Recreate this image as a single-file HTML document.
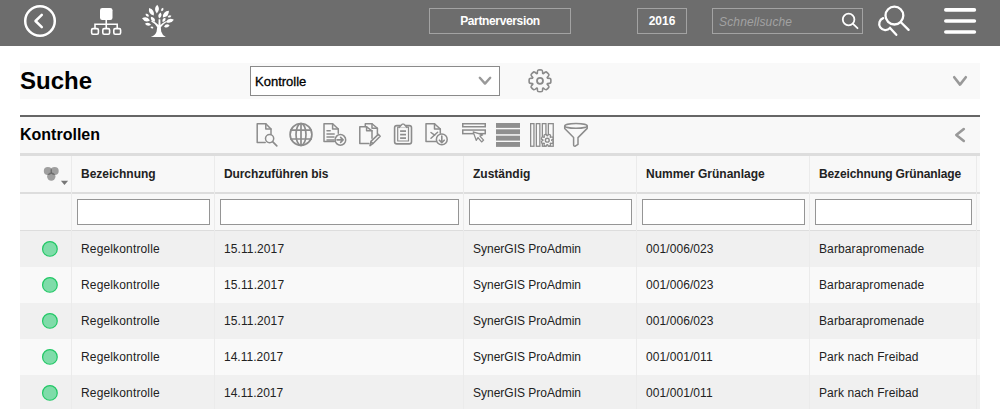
<!DOCTYPE html>
<html><head><meta charset="utf-8">
<style>
*{box-sizing:border-box;margin:0;padding:0}
html,body{width:1000px;height:409px;overflow:hidden;background:#fff;font-family:"Liberation Sans",sans-serif;color:#222}
.abs{position:absolute}
#hdr{position:absolute;left:0;top:0;width:1000px;height:46px;background:#6d6d6d}
.hbox{position:absolute;top:8px;height:26px;border:1px solid #a3a3a3;color:#fff;font-weight:bold;font-size:12px;line-height:24px;text-align:center}
#panel{position:absolute;left:20px;top:63px;width:960px;height:36px;background:#f9f9f9}
#sec{position:absolute;left:20px;top:115px;width:960px;height:38px;background:#f8f8f8;border-top:2px solid #666}
#tbl{position:absolute;left:20px;top:153px;width:960px;height:256px;overflow:hidden;background:#f8f8f8}
.hline{position:absolute;left:0;width:960px;background:#dddddd}
.vsep{position:absolute;width:1px;background:#ebebeb}
.row{position:absolute;left:0;width:960px;height:36px}
.odd{background:#f0f0f0}.even{background:#f9f9f9}
.txt{position:absolute;font-size:12px;white-space:nowrap}
.hd{font-weight:bold;color:#222}
.inp{position:absolute;top:46px;height:26px;border:1px solid #959595;background:#fff}
.dot{position:absolute;left:22px;width:16px;height:16px;border-radius:50%;background:#7ddaa6;border:1.5px solid #2ecc71}
</style></head><body>
<div id="hdr">
  <svg class="abs" style="left:0;top:0" width="1000" height="46" viewBox="0 0 1000 46">
    <g fill="none" stroke="#fff" stroke-width="2.5">
      <circle cx="40" cy="21" r="14.8"/>
      <polyline points="41.8,14.8 35.5,21 41.8,27.2" stroke-linecap="round" stroke-linejoin="round"/>
    </g>
    <!-- org chart -->
    <g fill="#fff">
      <rect x="100" y="8" width="12.5" height="12" rx="2.2"/>
    </g>
    <g fill="none" stroke="#fff" stroke-width="1.6">
      <line x1="106.25" y1="20" x2="106.25" y2="28.5"/>
      <polyline points="95,28.5 95,24.2 117.2,24.2 117.2,28.5"/>
      <rect x="91.6" y="28.6" width="6.8" height="5.6" rx="1.4"/>
      <rect x="102.8" y="28.6" width="6.8" height="5.6" rx="1.4"/>
      <rect x="113.8" y="28.6" width="6.8" height="5.6" rx="1.4"/>
    </g>
    <!-- tree -->
    <g fill="#fff"><path d="M150.8,37 L165.8,37 Q162.2,35.2 161.2,31.5 L160.8,27.2 Q163.2,24 166.5,22 L165.9,21.2 Q162.5,23 160.5,25 L160.3,19.2 L158.6,19.2 L158.5,25 Q156,22.2 151.8,20.6 L151.2,21.5 Q155,23.4 157.2,27.2 L156.6,31.5 Q155.6,35.2 150.8,37 Z"/><path d="M157.23,4.81 Q160.89,9.30 156.77,13.39 Q153.11,8.90 157.23,4.81Z"/><path d="M149.07,8.07 Q154.87,9.63 153.73,15.53 Q147.93,13.97 149.07,8.07Z"/><path d="M163.15,7.69 Q164.24,10.41 161.45,11.31 Q160.36,8.59 163.15,7.69Z"/><path d="M168.91,10.76 Q169.09,16.97 162.89,17.44 Q162.71,11.23 168.91,10.76Z"/><path d="M145.59,13.85 Q148.83,13.26 148.81,16.55 Q145.57,17.14 145.59,13.85Z"/><path d="M160.68,12.60 Q162.91,16.31 159.12,18.40 Q156.89,14.69 160.68,12.60Z"/><path d="M142.04,18.34 Q147.01,15.63 149.96,20.46 Q144.99,23.17 142.04,18.34Z"/><path d="M150.84,16.75 Q155.44,17.07 154.96,21.65 Q150.36,21.33 150.84,16.75Z"/><path d="M171.38,15.72 Q170.30,18.60 167.62,17.08 Q168.70,14.20 171.38,15.72Z"/><path d="M173.86,19.71 Q170.81,24.57 165.74,21.89 Q168.79,17.03 173.86,19.71Z"/><path d="M165.43,17.85 Q166.24,21.47 162.57,21.95 Q161.76,18.33 165.43,17.85Z"/><path d="M144.95,23.76 Q148.51,21.42 151.05,24.84 Q147.49,27.18 144.95,23.76Z"/><path d="M169.60,25.15 Q167.61,28.91 164.00,26.65 Q165.99,22.89 169.60,25.15Z"/><path d="M150.35,27.09 Q152.40,25.62 153.45,27.91 Q151.40,29.38 150.35,27.09Z"/></g>
    <!-- small search -->
    <g fill="none" stroke="#fff" stroke-width="1.8" stroke-linecap="round">
      <circle cx="848.6" cy="19.5" r="5.8"/>
      <line x1="852.8" y1="23.7" x2="857.5" y2="28.2"/>
    </g>
    <!-- double magnifier -->
    <g fill="none" stroke="#fff" stroke-width="2.3" stroke-linecap="round">
      <circle cx="894.4" cy="15.6" r="8.9"/>
      <line x1="900.9" y1="22.2" x2="908.6" y2="29.9"/>
      <path d="M883.18,18.11 A6.2,6.2 0 1 0 890.01,28.05 L896.3,34.8"/>
    </g>
    <!-- hamburger -->
    <g stroke="#fff" stroke-width="3.6" stroke-linecap="round">
      <line x1="945.8" y1="9.9" x2="974.4" y2="9.9"/>
      <line x1="945.8" y1="21" x2="974.4" y2="21"/>
      <line x1="945.8" y1="32" x2="974.4" y2="32"/>
    </g>
  </svg>
  <div class="hbox" style="left:429px;width:142px;letter-spacing:-0.36px">Partnerversion</div>
  <div class="hbox" style="left:637px;width:50px">2016</div>
  <div class="hbox" style="left:712px;width:151px;text-align:left"><span style="position:absolute;left:6px;top:1px;font-weight:normal;font-style:italic;color:#a2a2a2;letter-spacing:0.15px">Schnellsuche</span></div>
</div>

<div id="panel">
  <div class="txt" style="left:0;top:3px;font-size:24px;font-weight:bold;color:#000;line-height:30px">Suche</div>
  <div class="abs" style="left:230px;top:3px;width:250px;height:30px;border:1px solid #8a8a8a;background:#fff">
    <span class="txt" style="left:4px;top:7px;color:#000;line-height:16px;font-size:13px;-webkit-text-stroke:0.3px #000">Kontrolle</span>
  </div>
  <svg class="abs" style="left:0;top:0" width="960" height="36" viewBox="20 63 960 36">
    <polyline points="479.8,77.8 485,83.6 490.2,77.8" fill="none" stroke="#999" stroke-width="2.4" stroke-linecap="round" stroke-linejoin="round"/>
    <polyline points="954.2,77.2 960,84.6 965.8,77.2" fill="none" stroke="#999" stroke-width="2.6" stroke-linecap="round" stroke-linejoin="round"/>
    <g transform="translate(540 80.8)" fill="none" stroke="#8a8a8a" stroke-width="1.6">
      <path d="M-2.70,-7.42 Q-2.64,-10.58 -1.71,-10.77 A10.9,10.9 0 0 1 1.71,-10.77 Q2.64,-10.58 2.70,-7.42 A7.9,7.9 0 0 1 3.34,-7.16 Q5.61,-9.34 6.41,-8.82 A10.9,10.9 0 0 1 8.82,-6.41 Q9.34,-5.61 7.16,-3.34 A7.9,7.9 0 0 1 7.42,-2.70 Q10.58,-2.64 10.77,-1.71 A10.9,10.9 0 0 1 10.77,1.71 Q10.58,2.64 7.42,2.70 A7.9,7.9 0 0 1 7.16,3.34 Q9.34,5.61 8.82,6.41 A10.9,10.9 0 0 1 6.41,8.82 Q5.61,9.34 3.34,7.16 A7.9,7.9 0 0 1 2.70,7.42 Q2.64,10.58 1.71,10.77 A10.9,10.9 0 0 1 -1.71,10.77 Q-2.64,10.58 -2.70,7.42 A7.9,7.9 0 0 1 -3.34,7.16 Q-5.61,9.34 -6.41,8.82 A10.9,10.9 0 0 1 -8.82,6.41 Q-9.34,5.61 -7.16,3.34 A7.9,7.9 0 0 1 -7.42,2.70 Q-10.58,2.64 -10.77,1.71 A10.9,10.9 0 0 1 -10.77,-1.71 Q-10.58,-2.64 -7.42,-2.70 A7.9,7.9 0 0 1 -7.16,-3.34 Q-9.34,-5.61 -8.82,-6.41 A10.9,10.9 0 0 1 -6.41,-8.82 Q-5.61,-9.34 -3.34,-7.16 A7.9,7.9 0 0 1 -2.70,-7.42Z" stroke-linejoin="round"/>
      <circle r="3.0" stroke-width="1.8"/>
    </g>
  </svg>
</div>

<div id="sec">
  <div class="txt" style="left:0;top:8px;font-size:16px;font-weight:bold;color:#000;line-height:20px">Kontrollen</div>
  <svg class="abs" style="left:0;top:-2px" width="960" height="40" viewBox="20 115 960 40">
  <g fill="none" stroke="#8c8c8c" stroke-width="1.5" stroke-linejoin="round" stroke-linecap="round">
    <!-- 1 doc + magnifier -->
    <path d="M265.2,142.6 L257.2,142.6 L257.2,123.7 L265.8,123.7 L271,129 L271,134"/>
    <path d="M265.8,123.7 L265.8,129 L271,129"/>
    <circle cx="269.6" cy="138.6" r="4.1"/>
    <line x1="272.6" y1="141.6" x2="276.8" y2="145.8" stroke-width="1.7"/>
    <!-- 2 globe -->
    <g stroke-width="1.7">
      <circle cx="301" cy="134.4" r="10.9"/>
      <ellipse cx="301" cy="134.4" rx="5" ry="10.9"/>
      <line x1="301" y1="123.5" x2="301" y2="145.3"/>
      <line x1="290.8" y1="130.2" x2="311.2" y2="130.2"/>
      <line x1="290.8" y1="139" x2="311.2" y2="139"/>
    </g>
    <!-- 3 doc + arrow circle -->
    <path d="M334.3,141.5 L324,141.5 L324,123.7 L332.6,123.7 L338.3,129 L338.3,133.3"/>
    <path d="M332.6,123.7 L332.6,129 L338.3,129"/>
    <line x1="327" y1="130.7" x2="330.2" y2="130.7"/>
    <line x1="327" y1="134" x2="334.2" y2="134"/>
    <line x1="327" y1="137" x2="334" y2="137"/>
    <line x1="327" y1="139.9" x2="334" y2="139.9"/>
    <circle cx="340.4" cy="139.9" r="5.3"/>
    <path d="M337,139.9 L343,139.9 M340.6,137.4 L343.1,139.9 L340.6,142.4" stroke-width="1.6"/>
    <!-- 4 copy + pencil -->
    <path d="M365.3,126.6 L365.3,123.7 L372,123.7 L377.4,128.3 L377.4,134.2"/>
    <path d="M372,123.7 L372,128.3 L377.4,128.3"/>
    <path d="M368.8,143.4 L359.8,143.4 L359.8,126.8 L366.6,126.8 L372,130.8 L372,138.2"/>
    <path d="M366.6,126.8 L366.6,130.8 L372,130.8"/>
    <path d="M370,145.6 L370.9,141.4 L378.3,134.4 L380.2,136.3 L372.8,143.7 Z M370.9,141.4 L372.8,143.7"/>
    <!-- 5 clipboard -->
    <rect x="394.6" y="125.6" width="16.9" height="18.3" rx="2.2" stroke-width="1.6"/>
    <rect x="397.7" y="127.2" width="10.8" height="13.8" stroke-width="1.2"/>
    <path d="M399.3,127.4 L402.2,124.1 L403.9,124.1 L406.8,127.4" fill="#f8f8f8" stroke-width="1.4"/>
    <g stroke-width="1.7" stroke-linecap="butt">
      <line x1="400.1" y1="131.1" x2="406" y2="131.1"/>
      <line x1="400.1" y1="134.6" x2="406" y2="134.6"/>
      <line x1="400.1" y1="138.1" x2="406" y2="138.1"/>
    </g>
    <!-- 6 doc + x + download circle -->
    <path d="M436.3,141.5 L426,141.5 L426,123.7 L434.5,123.7 L440.3,129 L440.3,133.3"/>
    <path d="M434.5,123.7 L434.5,129 L440.3,129"/>
    <line x1="431" y1="132.5" x2="434.6" y2="135.2"/>
    <line x1="437.6" y1="132.3" x2="431" y2="138.3"/>
    <circle cx="441.8" cy="139.4" r="5.4"/>
    <path d="M441.8,136 L441.8,142.6 M439.4,140.2 L441.8,142.6 L444.2,140.2" stroke-width="1.6"/>
    <!-- 7 bars + cursor -->
    <rect x="462.75" y="123.75" width="22.5" height="3" stroke-linejoin="miter"/>
    <rect x="462.75" y="130.05" width="22.5" height="3.6" stroke-linejoin="miter"/>
    <path d="M473.2,131.9 L476.2,140.4 L478,137.6 L481.6,141.9 L483.6,140.1 L479.9,136.1 L482.6,134.9 Z" fill="#f8f8f8" stroke-width="1.3"/>
    <!-- 9 columns + gear -->
    <g stroke-width="1.3" stroke-linejoin="miter">
      <rect x="530.65" y="123.65" width="3.3" height="22.6"/>
      <rect x="536.35" y="123.65" width="3.5" height="22.6"/>
      <rect x="542.35" y="123.65" width="3.6" height="22.6"/>
      <rect x="548.35" y="123.65" width="4.9" height="22.6"/>
    </g>
    <path fill="#f8f8f8" stroke-width="1.3" stroke-linejoin="round" d="M547.57,135.81 Q548.31,134.18 548.72,134.27 A6.1,6.1 0 0 1 550.49,135.00 Q550.84,135.23 550.22,136.90 A4.4,4.4 0 0 1 550.60,137.28 Q552.27,136.66 552.50,137.01 A6.1,6.1 0 0 1 553.23,138.78 Q553.32,139.19 551.69,139.93 A4.4,4.4 0 0 1 551.69,140.47 Q553.32,141.21 553.23,141.62 A6.1,6.1 0 0 1 552.50,143.39 Q552.27,143.74 550.60,143.12 A4.4,4.4 0 0 1 550.22,143.50 Q550.84,145.17 550.49,145.40 A6.1,6.1 0 0 1 548.72,146.13 Q548.31,146.22 547.57,144.59 A4.4,4.4 0 0 1 547.03,144.59 Q546.29,146.22 545.88,146.13 A6.1,6.1 0 0 1 544.11,145.40 Q543.76,145.17 544.38,143.50 A4.4,4.4 0 0 1 544.00,143.12 Q542.33,143.74 542.10,143.39 A6.1,6.1 0 0 1 541.37,141.62 Q541.28,141.21 542.91,140.47 A4.4,4.4 0 0 1 542.91,139.93 Q541.28,139.19 541.37,138.78 A6.1,6.1 0 0 1 542.10,137.01 Q542.33,136.66 544.00,137.28 A4.4,4.4 0 0 1 544.38,136.90 Q543.76,135.23 544.11,135.00 A6.1,6.1 0 0 1 545.88,134.27 Q546.29,134.18 547.03,135.81 A4.4,4.4 0 0 1 547.57,135.81Z"/>
    <circle cx="547.3" cy="140.2" r="1.9" stroke-width="1.4"/>
    <!-- 10 funnel -->
    <path d="M564.7,126 L564.7,128.4 L573.6,137.6 L573.6,144.8 Q573.6,146.4 575.2,146.2 L578,144.4 L578,137.6 L587.2,128.4 L587.2,126" />
    <ellipse cx="576" cy="125.9" rx="11.25" ry="2.4"/>
  </g>
  <g fill="#8f8f8f">
    <rect x="496" y="123" width="24" height="4.9"/>
    <rect x="496" y="129.3" width="24" height="4.9"/>
    <rect x="496" y="135.7" width="24" height="4.9"/>
    <rect x="496" y="142" width="24" height="4.9"/>
  </g>
  <polyline points="963.8,129.1 956.3,135 963.8,140.9" fill="none" stroke="#999" stroke-width="2.6" stroke-linecap="round" stroke-linejoin="round"/>
</svg>
</div>

<div id="tbl">
  <div class="hline" style="top:0;height:3px"></div>
  <div class="hline" style="top:39px;height:2px"></div>
  <div class="hline" style="top:77px;height:1px"></div>
  <div class="row odd" style="top:78px"></div>
  <div class="row even" style="top:114px"></div>
  <div class="row odd" style="top:150px"></div>
  <div class="row even" style="top:186px"></div>
  <div class="row odd" style="top:222px"></div>
<!--TBL-->
<svg class="abs" style="left:0;top:0" width="60" height="40" viewBox="20 153 60 40">
  <g fill="rgba(50,50,50,0.45)">
    <circle cx="47.9" cy="171" r="4.1"/><circle cx="54.6" cy="171" r="4.1"/><circle cx="51.3" cy="176.6" r="4.2"/>
  </g>
  <path d="M60.9,180.8 L68.1,180.8 L64.5,185 Z" fill="#777"/>
</svg>
<div class="vsep" style="left:51px;top:3px;height:253px"></div>
<div class="vsep" style="left:194px;top:3px;height:253px"></div>
<div class="vsep" style="left:443px;top:3px;height:253px"></div>
<div class="vsep" style="left:616px;top:3px;height:253px"></div>
<div class="vsep" style="left:789px;top:3px;height:253px"></div>
<div class="vsep" style="left:956px;top:3px;height:253px"></div>
<div class="txt hd" style="left:61px;top:14px;line-height:14px;">Bezeichnung</div>
<div class="txt hd" style="left:204px;top:14px;line-height:14px;letter-spacing:-0.1px;">Durchzuführen bis</div>
<div class="txt hd" style="left:453px;top:14px;line-height:14px;">Zuständig</div>
<div class="txt hd" style="left:626px;top:14px;line-height:14px;">Nummer Grünanlage</div>
<div class="txt hd" style="left:799px;top:14px;line-height:14px;letter-spacing:-0.12px;">Bezeichnung Grünanlage</div>
<div class="inp" style="left:57px;width:133px"></div>
<div class="inp" style="left:200px;width:239px"></div>
<div class="inp" style="left:449px;width:163px"></div>
<div class="inp" style="left:622px;width:163px"></div>
<div class="inp" style="left:795px;width:157px"></div>
<svg class="abs" style="left:0;top:0" width="60" height="256" viewBox="20 153 60 256"><g fill="#7fdca9" stroke="#22c866" stroke-width="1.2"><circle cx="49.9" cy="248.9" r="7.35"/><circle cx="49.9" cy="284.9" r="7.35"/><circle cx="49.9" cy="320.9" r="7.35"/><circle cx="49.9" cy="356.9" r="7.35"/><circle cx="49.9" cy="392.9" r="7.35"/></g></svg>
<div class="txt" style="left:61px;top:89px;line-height:14px;color:#222;letter-spacing:0.15px;">Regelkontrolle</div>
<div class="txt" style="left:204px;top:89px;line-height:14px;color:#222;letter-spacing:0.1px;">15.11.2017</div>
<div class="txt" style="left:453px;top:89px;line-height:14px;color:#222;">SynerGIS ProAdmin</div>
<div class="txt" style="left:626px;top:89px;line-height:14px;color:#222;letter-spacing:0.08px;">001/006/023</div>
<div class="txt" style="left:799px;top:89px;line-height:14px;color:#222;letter-spacing:0.12px;">Barbarapromenade</div>
<div class="txt" style="left:61px;top:125px;line-height:14px;color:#222;letter-spacing:0.15px;">Regelkontrolle</div>
<div class="txt" style="left:204px;top:125px;line-height:14px;color:#222;letter-spacing:0.1px;">15.11.2017</div>
<div class="txt" style="left:453px;top:125px;line-height:14px;color:#222;">SynerGIS ProAdmin</div>
<div class="txt" style="left:626px;top:125px;line-height:14px;color:#222;letter-spacing:0.08px;">001/006/023</div>
<div class="txt" style="left:799px;top:125px;line-height:14px;color:#222;letter-spacing:0.12px;">Barbarapromenade</div>
<div class="txt" style="left:61px;top:161px;line-height:14px;color:#222;letter-spacing:0.15px;">Regelkontrolle</div>
<div class="txt" style="left:204px;top:161px;line-height:14px;color:#222;letter-spacing:0.1px;">15.11.2017</div>
<div class="txt" style="left:453px;top:161px;line-height:14px;color:#222;">SynerGIS ProAdmin</div>
<div class="txt" style="left:626px;top:161px;line-height:14px;color:#222;letter-spacing:0.08px;">001/006/023</div>
<div class="txt" style="left:799px;top:161px;line-height:14px;color:#222;letter-spacing:0.12px;">Barbarapromenade</div>
<div class="txt" style="left:61px;top:197px;line-height:14px;color:#222;letter-spacing:0.15px;">Regelkontrolle</div>
<div class="txt" style="left:204px;top:197px;line-height:14px;color:#222;">14.11.2017</div>
<div class="txt" style="left:453px;top:197px;line-height:14px;color:#222;">SynerGIS ProAdmin</div>
<div class="txt" style="left:626px;top:197px;line-height:14px;color:#222;letter-spacing:0.08px;">001/001/011</div>
<div class="txt" style="left:799px;top:197px;line-height:14px;color:#222;letter-spacing:0.08px;">Park nach Freibad</div>
<div class="txt" style="left:61px;top:233px;line-height:14px;color:#222;letter-spacing:0.15px;">Regelkontrolle</div>
<div class="txt" style="left:204px;top:233px;line-height:14px;color:#222;">14.11.2017</div>
<div class="txt" style="left:453px;top:233px;line-height:14px;color:#222;">SynerGIS ProAdmin</div>
<div class="txt" style="left:626px;top:233px;line-height:14px;color:#222;letter-spacing:0.08px;">001/001/011</div>
<div class="txt" style="left:799px;top:233px;line-height:14px;color:#222;letter-spacing:0.08px;">Park nach Freibad</div>
<!--/TBL-->
</div>
</body></html>
